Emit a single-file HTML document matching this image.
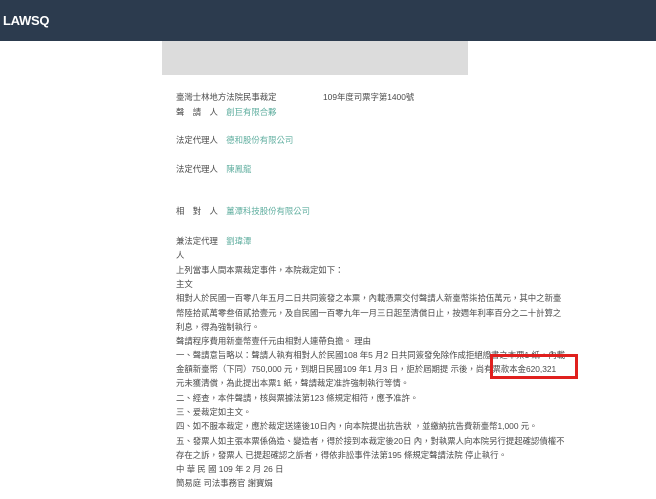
<!DOCTYPE html>
<html><head><meta charset="utf-8"><style>
*{margin:0;padding:0;box-sizing:border-box}
body{width:656px;height:499px;background:#fff;overflow:hidden;position:relative;font-family:"Liberation Sans","Noto Sans CJK TC",sans-serif;color:#4a4a4a;font-size:8.4px}
.hdr{position:absolute;left:0;top:0;width:656px;height:41px;background:#2c3b4e}
.logo{position:absolute;left:3px;top:13px;color:#fff;font-weight:bold;font-size:13px;letter-spacing:-0.3px}
.gray{position:absolute;left:162px;top:41px;width:306px;height:34px;background:#dcdcdc}
.t{position:absolute;left:176px;white-space:nowrap;line-height:12px}
.g{color:#5fae9f}
.red{position:absolute;left:490px;top:354px;width:88px;height:25px;border:3px solid #e0201e}
</style></head><body>
<div class="hdr"><div class="logo">LAWSQ</div></div>
<div class="gray"></div>
<div class="t" style="top:91px">臺灣士林地方法院民事裁定</div>
<div class="t" style="top:91px;left:323px">109年度司票字第1400號</div>
<div class="t" style="top:106px">聲　請　人　<span class="g">創巨有限合夥</span></div>
<div class="t" style="top:134px">法定代理人　<span class="g">德和股份有限公司</span></div>
<div class="t" style="top:163px">法定代理人　<span class="g">陳鳳龍</span></div>
<div class="t" style="top:205px">相　對　人　<span class="g">薑潭科技股份有限公司</span></div>
<div class="t" style="top:235px">兼法定代理　<span class="g">劉瑋潭</span></div>
<div class="t" style="top:249px">人</div>
<div class="t" style="top:264px">上列當事人間本票裁定事件，本院裁定如下：</div>
<div class="t" style="top:278px">主文</div>
<div class="t" style="top:292px">相對人於民國一百零八年五月二日共同簽發之本票，內載憑票交付聲請人新臺幣柒拾伍萬元，其中之新臺</div>
<div class="t" style="top:307px">幣陸拾貳萬零叁佰貳拾壹元，及自民國一百零九年一月三日起至清償日止，按週年利率百分之二十計算之</div>
<div class="t" style="top:321px">利息，得為強制執行。</div>
<div class="t" style="top:335px">聲請程序費用新臺幣壹仟元由相對人連帶負擔。 理由</div>
<div class="t" style="top:349px">一、聲請意旨略以：聲請人執有相對人於民國108 年5 月2 日共同簽發免除作成拒絕證書之本票1 紙，內載</div>
<div class="t" style="top:363px">金額新臺幣（下同）750,000 元，到期日民國109 年1 月3 日，詎於屆期提 示後，尚有票款本金620,321</div>
<div class="t" style="top:377px">元未獲清償，為此提出本票1 紙，聲請裁定准許強制執行等情。</div>
<div class="t" style="top:392px">二、經查，本件聲請，核與票據法第123 條規定相符，應予准許。</div>
<div class="t" style="top:406px">三、爰裁定如主文。</div>
<div class="t" style="top:420px">四、如不服本裁定，應於裁定送達後10日內，向本院提出抗告狀 ，並繳納抗告費新臺幣1,000 元。</div>
<div class="t" style="top:435px">五、發票人如主張本票係偽造、變造者，得於接到本裁定後20日 內，對執票人向本院另行提起確認債權不</div>
<div class="t" style="top:449px">存在之訴，發票人 已提起確認之訴者，得依非訟事件法第195 條規定聲請法院 停止執行。</div>
<div class="t" style="top:463px">中 華 民 國 109 年 2 月 26 日</div>
<div class="t" style="top:477px">簡易庭 司法事務官 謝寶娟</div>
<div class="red"></div>
</body></html>
